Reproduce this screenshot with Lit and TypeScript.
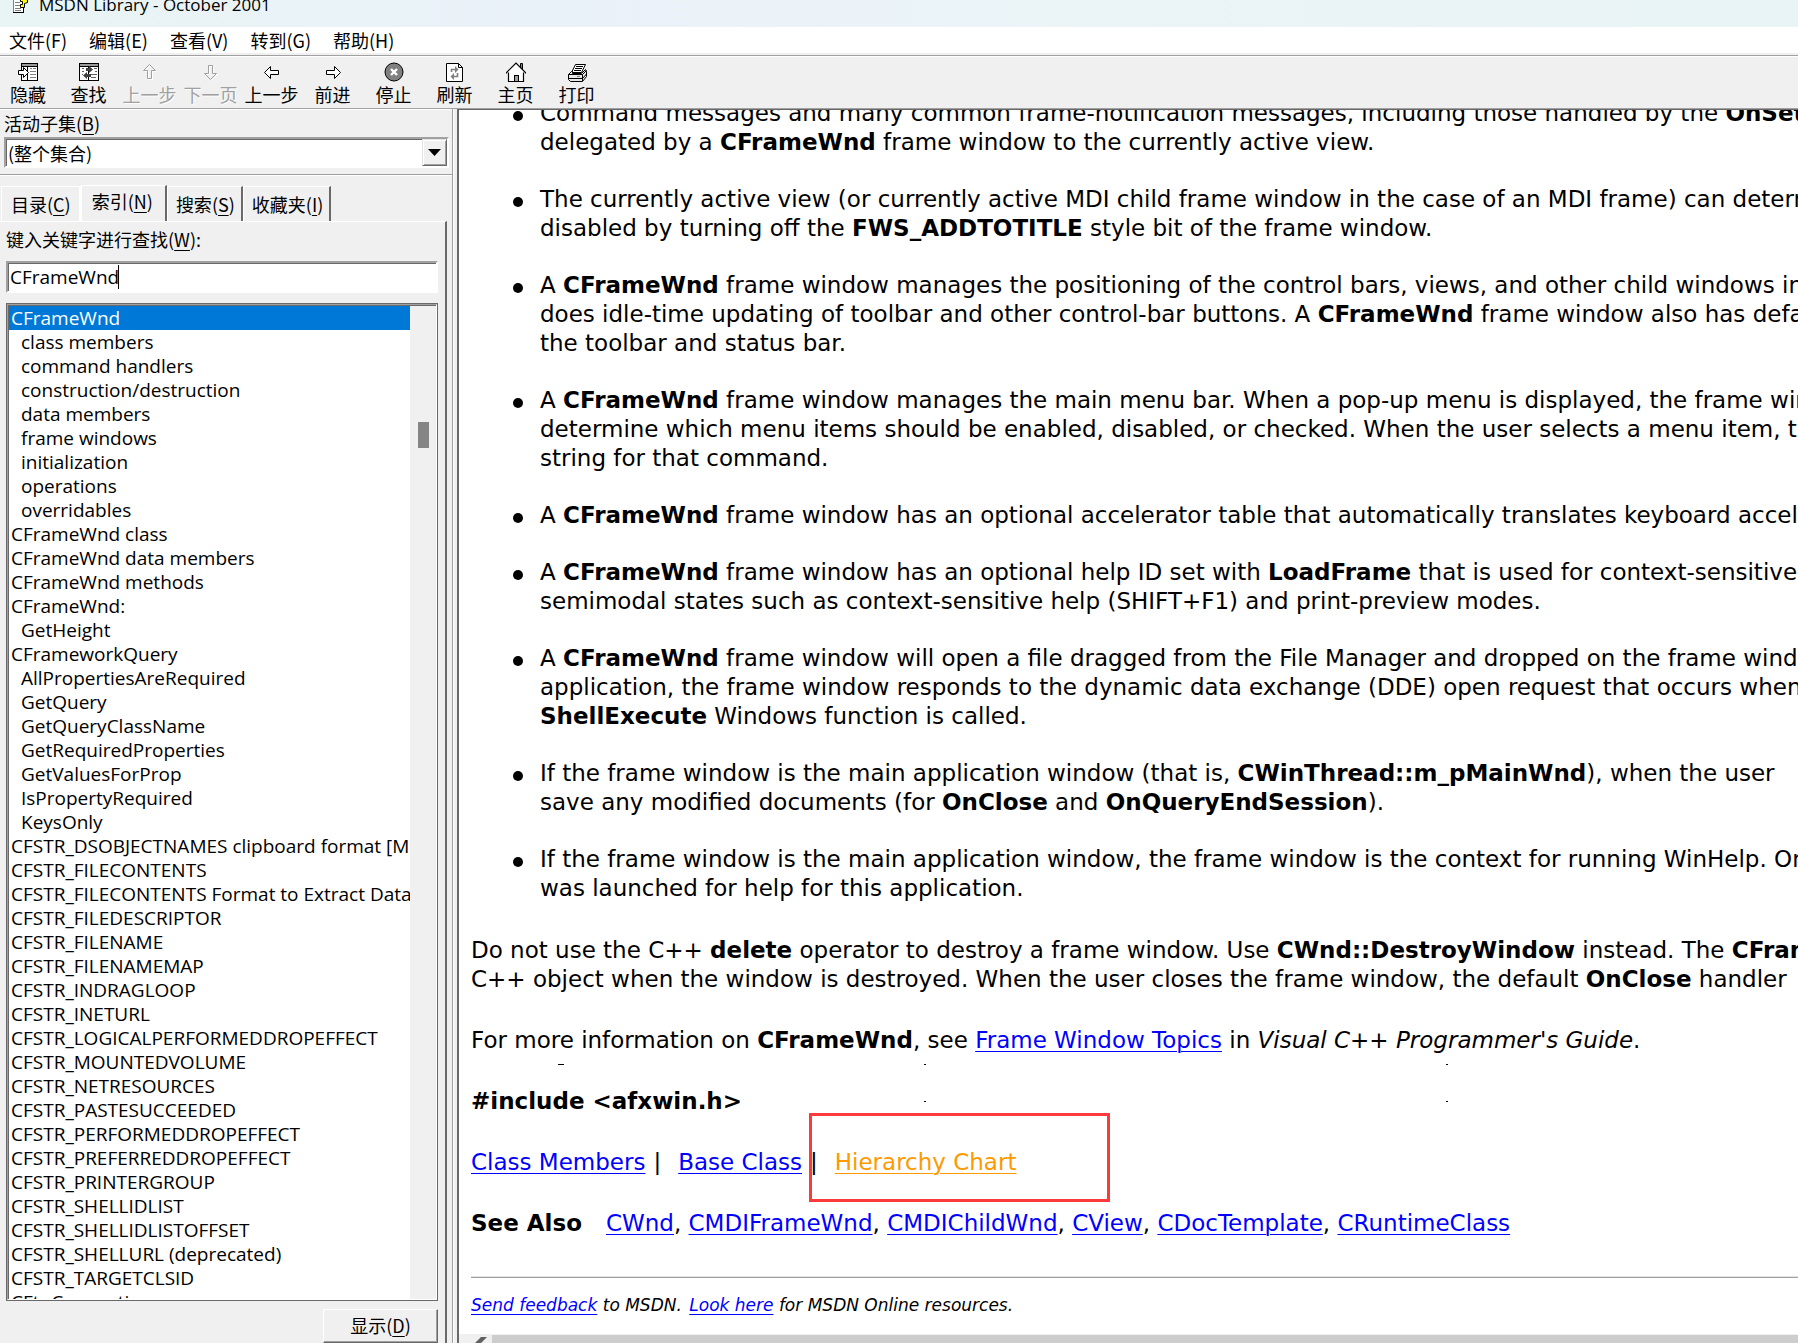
import { LitElement, html, svg, css, TemplateResult } from "lit";
import { customElement, state } from "lit/decorators.js";
import { classMap } from "lit/directives/class-map.js";

interface Tool {
  label: string;
  icon: TemplateResult;
  disabled?: boolean;
}

const arrow = "M2.5 10.5 L8.5 4.5 V8.5 H16.5 V12.5 H8.5 V16.5 Z";

const tools: Tool[] = [
  {
    label: "隐藏",
    icon: svg`
      <rect x="3.5" y="1.5" width="16" height="17" fill="#fff" stroke="#000"/>
      <rect x="4" y="2" width="15" height="2" fill="#9a9a9a"/>
      <path d="M4 4.5H19M9.5 4V18" stroke="#000" fill="none"/>
      <path d="M12 6.5H14M15 6.5H18M12 9.5H18M12 12.5H18M12 15.5H18" stroke="#808080" fill="none"/>
      <path d="M.5 8.5H5.5V5.5L10.5 10.5L5.5 15.5V12.5H.5Z" fill="#fff" stroke="#000"/>`,
  },
  {
    label: "查找",
    icon: svg`
      <rect x=".5" y="1.5" width="19" height="17" fill="#fff" stroke="#000"/>
      <rect x="1" y="2" width="18" height="2" fill="#9a9a9a"/>
      <path d="M1 4.5H19M9.5 4V18" stroke="#000" fill="none"/>
      <path d="M3 6.5H5M3 9.5H5M3 12.5H4M12 15.5H17M15 6.5H18M16 9.5H18M12 12.5H18" stroke="#606060" fill="none"/>
      <path d="M7 6H10V4L14 7.5L10 11V9H7Z" fill="#404040"/>
      <path d="M12 12H8V10L4 13.5L8 17V15H12Z" fill="#404040"/>`,
  },
  {
    label: "上一步",
    disabled: true,
    icon: svg`<g transform="rotate(90 10 10)" fill="none">
      <path d="${arrow}" stroke="#fff" transform="translate(1 -1)"/>
      <path d="${arrow}" stroke="#a0a0a0"/></g>`,
  },
  {
    label: "下一页",
    disabled: true,
    icon: svg`<g transform="rotate(-90 10 10)" fill="none">
      <path d="${arrow}" stroke="#fff" transform="translate(-1 0)"/>
      <path d="${arrow}" stroke="#a0a0a0" transform="translate(0 -1)"/></g>`,
  },
  { label: "上一步", icon: svg`<path d="${arrow}" fill="#fff" stroke="#000"/>` },
  { label: "前进", icon: svg`<path d="${arrow}" fill="#fff" stroke="#000" transform="matrix(-1 0 0 1 20 0)"/>` },
  {
    label: "停止",
    icon: svg`<circle cx="10" cy="10" r="9" fill="#808080" stroke="#000"/>
      <path d="M7 7L13 13M13 7L7 13" stroke="#fff" stroke-width="2.4"/>`,
  },
  {
    label: "刷新",
    icon: svg`<path d="M1.5 1.5H13.5L17.5 5.5V19.5H1.5Z" fill="#fff" stroke="#000"/>
      <path d="M13.5 1.5V5.5H17.5" fill="none" stroke="#000"/>
      <path d="M6.5 10V7.5H11M12.5 11V14.5H8" fill="none" stroke="#808080" stroke-width="1.6"/>
      <path d="M10 4L13.5 7.5L10 11ZM9 11L5.5 14.5L9 18Z" fill="#808080"/>`,
  },
  {
    label: "主页",
    icon: svg`<path d="M14.5 6V1.5H16.5V8" fill="#808080" stroke="#000"/>
      <path d="M2.5 10V19.5H17.5V10L10 2.5Z" fill="#fff"/>
      <path d="M2.5 10.5V19.5H17.5V10.5M.5 11.5V10.5L10 1L19.5 10.5V11.5" fill="none" stroke="#000" stroke-width="1.2"/>
      <rect x="8.5" y="13.5" width="4" height="6" fill="#a0a0a0" stroke="#000"/>`,
  },
  {
    label: "打印",
    icon: svg`<path d="M4.5 10.5L8.5 2.5H18.5L14.5 10.5Z" fill="#fff" stroke="#000"/>
      <path d="M9 4.5H16M8 6.5H15M7 8.5H14" stroke="#000"/>
      <path d="M1.5 12.5L4.5 9.5H5.5V11.5H14.5L18.5 7.5L19.5 9.5V14.5L15.5 19.5H3.5L1.5 17.5Z" fill="#e8e8e8" stroke="#000"/>
      <path d="M1.5 12.5H15.5L19.5 8.5M15.5 12.5V19M1.5 16.5H15.5L19.5 12" fill="none" stroke="#000"/>
      <path d="M10 14.5H13" stroke="#808080"/>`,
  },
];

const menus = ["文件(F)", "编辑(E)", "查看(V)", "转到(G)", "帮助(H)"];

const tabs: [string, string][] = [
  ["目录", "C"],
  ["索引", "N"],
  ["搜索", "S"],
  ["收藏夹", "I"],
];

/* A leading ">" marks an entry nested below its keyword. */
const keywords = [
  "CFrameWnd", ">class members", ">command handlers", ">construction/destruction", ">data members",
  ">frame windows", ">initialization", ">operations", ">overridables", "CFrameWnd class",
  "CFrameWnd data members", "CFrameWnd methods", "CFrameWnd:", ">GetHeight", "CFrameworkQuery",
  ">AllPropertiesAreRequired", ">GetQuery", ">GetQueryClassName", ">GetRequiredProperties",
  ">GetValuesForProp", ">IsPropertyRequired", ">KeysOnly",
  "CFSTR_DSOBJECTNAMES clipboard format [MFC]", "CFSTR_FILECONTENTS",
  "CFSTR_FILECONTENTS Format to Extract Data from", "CFSTR_FILEDESCRIPTOR", "CFSTR_FILENAME",
  "CFSTR_FILENAMEMAP", "CFSTR_INDRAGLOOP", "CFSTR_INETURL", "CFSTR_LOGICALPERFORMEDDROPEFFECT",
  "CFSTR_MOUNTEDVOLUME", "CFSTR_NETRESOURCES", "CFSTR_PASTESUCCEEDED", "CFSTR_PERFORMEDDROPEFFECT",
  "CFSTR_PREFERREDDROPEFFECT", "CFSTR_PRINTERGROUP", "CFSTR_SHELLIDLIST", "CFSTR_SHELLIDLISTOFFSET",
  "CFSTR_SHELLURL (deprecated)", "CFSTR_TARGETCLSID", "CFtpConnection",
];

const wnd = html`<b>CFrameWnd</b>`;

const remarks = [
  html`Command messages and many common frame-notification messages, including those handled by the <b>OnSetFocus</b><br>delegated by a ${wnd} frame window to the currently active view.`,
  html`The currently active view (or currently active MDI child frame window in the case of an MDI frame) can determine<br>disabled by turning off the <b>FWS_ADDTOTITLE</b> style bit of the frame window.`,
  html`A ${wnd} frame window manages the positioning of the control bars, views, and other child windows inside<br>does idle-time updating of toolbar and other control-bar buttons. A ${wnd} frame window also has default<br>the toolbar and status bar.`,
  html`A ${wnd} frame window manages the main menu bar. When a pop-up menu is displayed, the frame window<br>determine which menu items should be enabled, disabled, or checked. When the user selects a menu item, the<br>string for that command.`,
  html`A ${wnd} frame window has an optional accelerator table that automatically translates keyboard accelerators.`,
  html`A ${wnd} frame window has an optional help ID set with <b>LoadFrame</b> that is used for context-sensitive<br>semimodal states such as context-sensitive help (SHIFT+F1) and print-preview modes.`,
  html`A ${wnd} frame window will open a file dragged from the File Manager and dropped on the frame window.<br>application, the frame window responds to the dynamic data exchange (DDE) open request that occurs when<br><b>ShellExecute</b> Windows function is called.`,
  html`If the frame window is the main application window (that is, <b>CWinThread::m_pMainWnd</b>), when the user<br>save any modified documents (for <b>OnClose</b> and <b>OnQueryEndSession</b>).`,
  html`If the frame window is the main application window, the frame window is the context for running WinHelp. Only<br>was launched for help for this application.`,
];

const related = ["CWnd", "CMDIFrameWnd", "CMDIChildWnd", "CView", "CDocTemplate", "CRuntimeClass"];

@customElement("app-root")
export class AppRoot extends LitElement {
  @state() private tab = 1;
  @state() private selected = 0;

  static styles = css`
    :host { display: block; }
    * { box-sizing: border-box; }
    .app {
      display: flex; flex-direction: column; height: 100vh; overflow: hidden;
      background: #f0f0f0; color: #000;
      font: 18px/24px "Noto Sans CJK SC", sans-serif;
    }
    button, select, input { font: inherit; color: inherit; margin: 0; border-radius: 0; }
    button { background: none; border: 0; padding: 0; }
    u { text-underline-offset: 3px; text-decoration-thickness: 1px; }

    .title {
      display: flex; gap: 11px; height: 27px; padding-left: 12px; overflow: hidden; flex: none;
      background: linear-gradient(90deg, #e9f4f4, #eaf2f9 30%, #ebf4f7 60%, #e9f4f6);
    }
    .title svg { width: 16px; height: 20px; margin-top: -6px; }
    .title h1 { margin: -7px 0 0; font: 17px/24px "Open Sans", sans-serif; }

    .menu { display: flex; gap: 22px; height: 28px; padding: 0 0 2px 9px; background: #fff; flex: none; }
    .menu { border-bottom: 2px solid #f0f0f0; padding-bottom: 0; }

    .tools {
      display: flex; flex: none; height: 54px; padding-top: 6px;
      border-top: 1px solid #a0a0a0; border-bottom: 1px solid #a0a0a0; box-shadow: inset 0 1px #fff;
    }
    .tool { display: flex; flex-direction: column; align-items: center; width: 61px; white-space: nowrap; }
    .tool:first-child { width: 58px; padding-right: 2px; }
    .tool svg { width: 20px; height: 20px; flex: none; }
    .tool:disabled { color: #a0a0a0; text-shadow: 1px 1px #fff; }

    .work { display: flex; flex: 1; min-height: 0; }
    .side { display: flex; flex-direction: column; flex: none; width: 452px; box-shadow: inset 0 1px #fff; }
    .subset { padding: 2px 3px 6px 4px; border-bottom: 1px solid #a0a0a0; }
    .subset label { display: block; height: 26px; }
    .combo { position: relative; display: block; }
    .sunken { border: 2px solid; border-color: #a0a0a0 #fff #fff #a0a0a0; box-shadow: inset 1px 1px #696969; background: #fff; }
    .combo select { display: block; width: 100%; height: 31px; appearance: none; padding: 0 2px; outline: 0; }
    .drop {
      position: absolute; top: 2px; right: 2px; bottom: 2px; width: 25px; pointer-events: none;
      display: flex; align-items: center; justify-content: center;
      background: #f0f0f0; border: 1px solid; border-color: #e3e3e3 #696969 #696969 #e3e3e3;
      box-shadow: inset 1px 1px #fff, inset -1px -1px #a0a0a0;
    }

    .tabs { display: flex; align-items: flex-end; padding: 9px 0 0 1px; border-top: 1px solid #fff; }
    .tab {
      height: 35px; padding: 0 6px 1px 8px; border-left: 1px solid #fff; border-top: 1px solid #fff;
      border-right: 2px solid #696969; white-space: nowrap;
    }
    .tab:first-child { border-right-color: #fff; padding: 0 8px 1px 9px; }
    .tab.on { height: 37px; margin-bottom: -1px; padding: 0 12px 6px 10px; background: #f0f0f0; }
    .page {
      display: flex; flex-direction: column; flex: 1; min-height: 0; margin-right: 5px; padding: 5px 7px 0 6px;
      border-top: 1px solid #fff; border-right: 2px solid #696969;
    }
    .page > label { height: 34px; }
    .field { position: relative; display: block; }
    .latin { font-family: "Open Sans", "Noto Sans CJK SC", sans-serif; font-size: 19px; }
    .field input { display: block; width: 100%; height: 32px; padding: 0 2px; outline: 0; }
    .caret { position: absolute; left: 112px; top: 4px; width: 1px; height: 24px; background: #000; }
    .list { display: flex; flex: 1; min-height: 0; margin-top: 10px; border: 1px solid #696969; }
    .inner {
      display: flex; flex: 1; min-width: 0; padding: 1px 0 0 1px; background: #fff;
      border: 1px solid; border-color: #a0a0a0 #fff #fff #a0a0a0; box-shadow: inset 1px 1px #696969;
    }
    .rows { flex: 1; min-width: 0; overflow: hidden; margin: 0; padding: 0; list-style: none; }
    .row { height: 24px; padding-left: 2px; white-space: nowrap; overflow: hidden; cursor: default; }
    .row.sub { padding-left: 12px; }
    .row.on { background: #0078d7; color: #fff; }
    .track { flex: none; width: 26px; padding: 116px 7px 0 8px; background: #f0f0f0; }
    .thumb { height: 26px; background: #858585; }
    .show {
      align-self: flex-end; width: 115px; height: 34px; margin-top: 8px; padding-bottom: 3px; flex: none;
      border: 1px solid; border-color: #fff #696969 #696969 #fff; box-shadow: inset -1px -1px #a0a0a0;
    }

    .split { flex: none; width: 5px; border-left: 1px solid #a0a0a0; box-shadow: inset 1px 0 #fff; }
    .doc {
      display: flex; flex-direction: column; flex: 1; min-width: 0; background: #fff;
      border-left: 2px solid #696969; border-top: 1px solid #696969;
      font: 23px/29px "DejaVu Sans", Verdana, sans-serif;
    }
    .body { flex: 1; min-height: 0; overflow: hidden; white-space: nowrap; padding-left: 12px; }
    .body ul { display: flex; flex-direction: column; gap: 28px; margin: -11px 0 33px; padding: 0; list-style: none; }
    .body li { display: flex; }
    .body li::before { content: ""; width: 10px; height: 10px; margin: 12px 17px 0 42px; border-radius: 50%; background: #000; flex: none; }
    .body p { margin: 0 0 32px; }
    a { color: #00f; text-underline-offset: 3px; text-decoration-thickness: 1px; }
    .links { display: flex; }
    .bar { padding: 0 17px 0 8px; }
    a.active { color: #f90; }
    .boxed { position: relative; }
    .mark { position: absolute; left: -26px; top: -35px; width: 301px; height: 89px; border: 3px solid #fc3a3c; pointer-events: none; }
    .also b { margin-right: 24px; }
    hr { margin: 38px 0 0; border: 0; border-top: 1px solid #e3e3e3; border-bottom: 1px solid #a0a0a0; }
    .body .foot { margin: 13px 0 0; font-size: 17px; font-style: italic; }
    .foot a + a { margin-left: 2px; }
    .include { position: relative; }
    .speck { position: absolute; width: 2px; height: 1px; background: #000; }
    .s1 { left: 87px; top: -23px; width: 6px; }
    .s2 { left: 453px; top: -23px; }
    .s3 { left: 453px; top: 14px; }
    .s4 { left: 975px; top: -23px; }
    .s5 { left: 975px; top: 14px; }
    .hscroll { display: flex; flex: none; height: 9px; overflow: hidden; background: #f0f0f0; border-top: 1px solid #f0f0f0; }
    .hscroll svg { width: 33px; height: 18px; flex: none; }
    .hthumb { flex: 1; background: #cdcdcd; }
  `;

  private renderSide() {
    return html`
      <aside class="side">
        <div class="subset">
          <label for="subset">活动子集(<u>B</u>)</label>
          <div class="combo">
            <select id="subset" class="sunken"><option>(整个集合)</option></select>
            <span class="drop"><svg width="13" height="7"><path d="M0 0H13L6.5 7Z"/></svg></span>
          </div>
        </div>
        <div class="tabs" role="tablist">
          ${tabs.map(([name, key], i) => html`
            <button class=${classMap({ tab: true, on: this.tab === i })} role="tab"
              aria-selected=${this.tab === i} @click=${() => (this.tab = i)}>${name}(<u>${key}</u>)</button>`)}
        </div>
        <div class="page">
          <label for="keyword">键入关键字进行查找(<u>W</u>):</label>
          <div class="field latin">
            <input id="keyword" class="sunken" value="CFrameWnd"><span class="caret"></span>
          </div>
          <div class="list latin">
            <div class="inner">
              <ul class="rows" role="listbox" aria-label="索引">
                ${keywords.map((k, i) => html`
                  <li class=${classMap({ row: true, sub: k.startsWith(">"), on: this.selected === i })} role="option"
                    aria-selected=${this.selected === i} @click=${() => (this.selected = i)}>${k.replace(">", "")}</li>`)}
              </ul>
              <div class="track"><div class="thumb"></div></div>
            </div>
          </div>
          <button class="show">显示(<u>D</u>)</button>
        </div>
      </aside>`;
  }

  private renderDocument() {
    return html`
      <main class="doc">
        <article class="body">
          <ul>${remarks.map((r) => html`<li><div>${r}</div></li>`)}</ul>
          <p>Do not use the C++ <b>delete</b> operator to destroy a frame window. Use <b>CWnd::DestroyWindow</b> instead. The <b>CFrameWnd</b><br>C++ object when the window is destroyed. When the user closes the frame window, the default <b>OnClose</b> handler</p>
          <p>For more information on ${wnd}, see <a href="#topics">Frame Window Topics</a> in <i>Visual C++ Programmer's Guide</i>.</p>
          <p class="include"><b>#include &lt;afxwin.h&gt;</b>${[1, 2, 3, 4, 5].map((n) => html`<span class="speck s${n}"></span>`)}</p>
          <p class="links"><a href="#members">Class Members</a><span class="bar">|</span><a href="#base">Base Class</a><span class="bar">|</span><span class="boxed"><a class="active" href="#chart">Hierarchy Chart</a><span class="mark"></span></span></p>
          <p class="also"><b>See Also</b>${related.map((r, i) => html`${i ? ", " : ""}<a href="#${r}">${r}</a>`)}</p>
          <hr>
          <p class="foot"><a href="#feedback">Send feedback</a> to MSDN. <a href="#look">Look here</a> for MSDN Online resources.</p>
        </article>
        <div class="hscroll">
          <svg viewBox="0 0 33 18"><path d="M28 2H22L15 9L22 16H28L21 9Z" fill="#606060"/></svg>
          <div class="hthumb"></div>
        </div>
      </main>`;
  }

  render() {
    return html`
      <div class="app">
        <header class="title">
          <svg viewBox="0 0 16 20">
            <path d="M1.5 4.5H11.5V18.5H1.5Z" fill="#fff" stroke="#808080"/>
            <path d="M1 18.5H12M11.5 8V19" stroke="#000"/>
            <path d="M3 8.5H8M3 11.5H8M3 14.5H9M3 16.5H9" stroke="#808080"/>
            <path d="M8.5 13.5V10.5H10.5V7.5H8.5V3.5H15.5V8.5L12.5 9.5V13.5Z" fill="#ff0" stroke="#000"/>
          </svg>
          <h1>MSDN Library - October 2001</h1>
        </header>
        <nav class="menu">${menus.map((m) => html`<button>${m}</button>`)}</nav>
        <div class="tools" role="toolbar">
          ${tools.map((t) => html`
            <button class="tool" ?disabled=${t.disabled}><svg viewBox="0 0 20 20">${t.icon}</svg>${t.label}</button>`)}
        </div>
        <div class="work">
          ${this.renderSide()}
          <div class="split"></div>
          ${this.renderDocument()}
        </div>
      </div>`;
  }
}
